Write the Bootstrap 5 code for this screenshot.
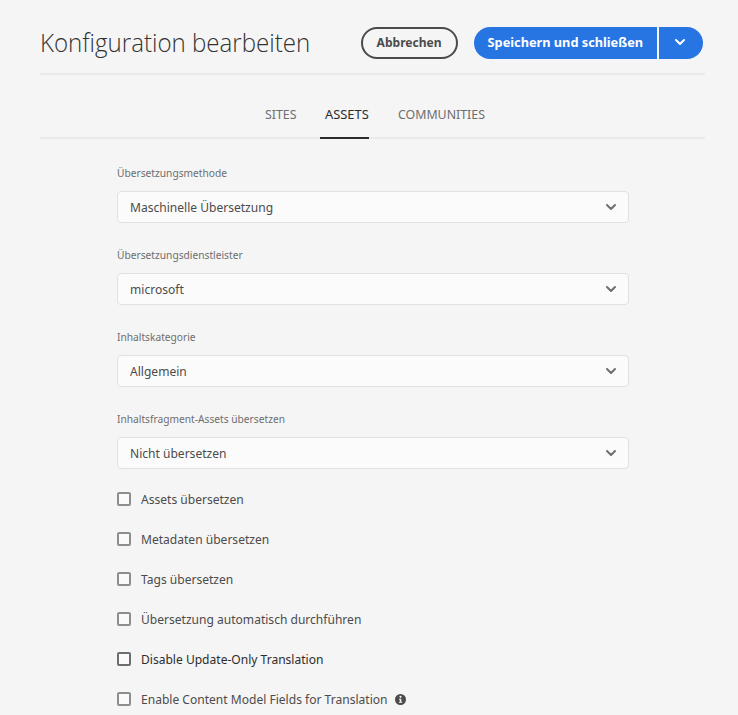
<!DOCTYPE html>
<html lang="de">
<head>
<meta charset="utf-8">
<title>Konfiguration bearbeiten</title>
<link rel="stylesheet" href="https://cdn.jsdelivr.net/npm/bootstrap@5.3.0/dist/css/bootstrap.min.css">
<style>
body{background:#f5f5f5;font-family:"Noto Sans","Open Sans",sans-serif;color:#4b4b4b;overflow:hidden;height:715px}
.fit{display:inline-block;white-space:nowrap;transform-origin:0 50%;transform:scaleX(.927)}
.page{margin-left:40px;width:665px}
.top{height:75px;border-bottom:2px solid #eaeaea}
.title{font-family:"Open Sans","Noto Sans",sans-serif;font-weight:300;font-size:26.5px;line-height:36px;color:#323232;margin:24px 0 0;width:321px}
.title .fit{transform:scaleX(.909)}
.top .btn{margin-top:27px;height:32px;font-size:13px;font-weight:700;padding:0;border:0}
.top .btn .fit{transform-origin:50% 50%}
.top .b-cancel{width:97px;border:2px solid #4b4b4b;border-radius:16px;color:#4b4b4b;line-height:24px;padding-bottom:2px;margin-right:16px}
.top .b-save{width:183px;border-radius:16px 0 0 16px;background:#2775e3;color:#fff;margin-right:2px;line-height:28px;padding-bottom:2px}
.top .b-save .fit{transform:scaleX(.98)}
.top .b-more{width:44px;border-radius:0 16px 16px 0;background:#2775e3;padding:0 2px 2px 0}
.tabs{height:64px;border-bottom:2px solid #eaeaea}
.tab{font-size:13px;color:#6e6e6e;line-height:18px;padding-top:30px;height:64px;text-decoration:none}
.tab .fit{transform:scaleX(.95)}
.tab.on{border-bottom:2px solid #2c2c2c;color:#2c2c2c;width:49px;padding-left:5px;margin:0 29px 0 23px}
.tab.on .fit{transform:scaleX(.99)}
.t1{margin-left:225px;width:32px}
.formcol{margin-left:77px;width:512px;padding-top:24px}
.lab{font-size:11px;line-height:18px;height:28px;padding-top:1px;color:#6e6e6e}
.sel{height:32px;border:1px solid #e1e1e1;border-radius:4px;background:#fbfbfb;font-size:13px;padding:0 11px 0 12px;margin-bottom:22px}
.sel .fit{padding-top:2px}
.chk{height:20px;line-height:20px;margin-bottom:20px;font-size:13px}
.box{width:14px;height:14px;border:2px solid #8e8e8e;border-radius:2px;background:#fafafa;margin-right:9.5px}
.dark{color:#2c2c2c}
.dark .box{border-color:#6e6e6e}
.info{margin-left:-11px}
</style>
</head>
<body>
<main class="page">
<header class="top d-flex"><h1 class="title"><span class="fit">Konfiguration bearbeiten</span></h1>
<button class="btn b-cancel"><span class="fit">Abbrechen</span></button>
<button class="btn b-save"><span class="fit">Speichern und schließen</span></button>
<button class="btn b-more d-flex align-items-center justify-content-center" aria-label="Mehr"><svg width="12" height="8" viewBox="0 0 12 8" fill="none" stroke="#fff" stroke-width="2" stroke-linecap="round" stroke-linejoin="round"><path d="M2 2l4 4 4-4"/></svg></button>
</header>
<nav class="tabs d-flex"><a class="tab t1"><span class="fit">SITES</span></a><a class="tab on"><span class="fit">ASSETS</span></a><a class="tab"><span class="fit">COMMUNITIES</span></a></nav>
<form class="formcol">
<div class="lab"><span class="fit">Übersetzungsmethode</span></div>
<div class="sel d-flex align-items-center justify-content-between"><span class="fit">Maschinelle Übersetzung</span><svg width="12" height="8" viewBox="0 0 12 8" fill="none" stroke="#6e6e6e" stroke-width="2" stroke-linecap="round" stroke-linejoin="round"><path d="M2 2l4 4 4-4"/></svg></div>
<div class="lab"><span class="fit">Übersetzungsdienstleister</span></div>
<div class="sel d-flex align-items-center justify-content-between"><span class="fit">microsoft</span><svg width="12" height="8" viewBox="0 0 12 8" fill="none" stroke="#6e6e6e" stroke-width="2" stroke-linecap="round" stroke-linejoin="round"><path d="M2 2l4 4 4-4"/></svg></div>
<div class="lab"><span class="fit">Inhaltskategorie</span></div>
<div class="sel d-flex align-items-center justify-content-between"><span class="fit">Allgemein</span><svg width="12" height="8" viewBox="0 0 12 8" fill="none" stroke="#6e6e6e" stroke-width="2" stroke-linecap="round" stroke-linejoin="round"><path d="M2 2l4 4 4-4"/></svg></div>
<div class="lab"><span class="fit">Inhaltsfragment-Assets übersetzen</span></div>
<div class="sel d-flex align-items-center justify-content-between mb-0"><span class="fit">Nicht übersetzen</span><svg width="12" height="8" viewBox="0 0 12 8" fill="none" stroke="#6e6e6e" stroke-width="2" stroke-linecap="round" stroke-linejoin="round"><path d="M2 2l4 4 4-4"/></svg></div>
<div class="pt-3 mt-1">
<label class="chk d-flex align-items-center"><span class="box"></span><span class="fit">Assets übersetzen</span></label>
<label class="chk d-flex align-items-center"><span class="box"></span><span class="fit">Metadaten übersetzen</span></label>
<label class="chk d-flex align-items-center"><span class="box"></span><span class="fit">Tags übersetzen</span></label>
<label class="chk d-flex align-items-center"><span class="box"></span><span class="fit">Übersetzung automatisch durchführen</span></label>
<label class="chk dark d-flex align-items-center"><span class="box"></span><span class="fit">Disable Update-Only Translation</span></label>
<label class="chk d-flex align-items-center"><span class="box"></span><span class="fit">Enable Content Model Fields for Translation</span><svg class="info" width="11" height="11" viewBox="0 0 11 11"><circle cx="5.5" cy="5.5" r="5.5" fill="#4b4b4b"/><circle cx="5.5" cy="2.8" r="1.1" fill="#f5f5f5"/><path d="M4 4.7h2.3v3.1h.9v1H3.9v-1h.9V5.7H4z" fill="#f5f5f5"/></svg></label>
</div>
</form>
</main>
<script src="https://cdn.jsdelivr.net/npm/bootstrap@5.3.0/dist/js/bootstrap.bundle.min.js"></script>
</body></html>
